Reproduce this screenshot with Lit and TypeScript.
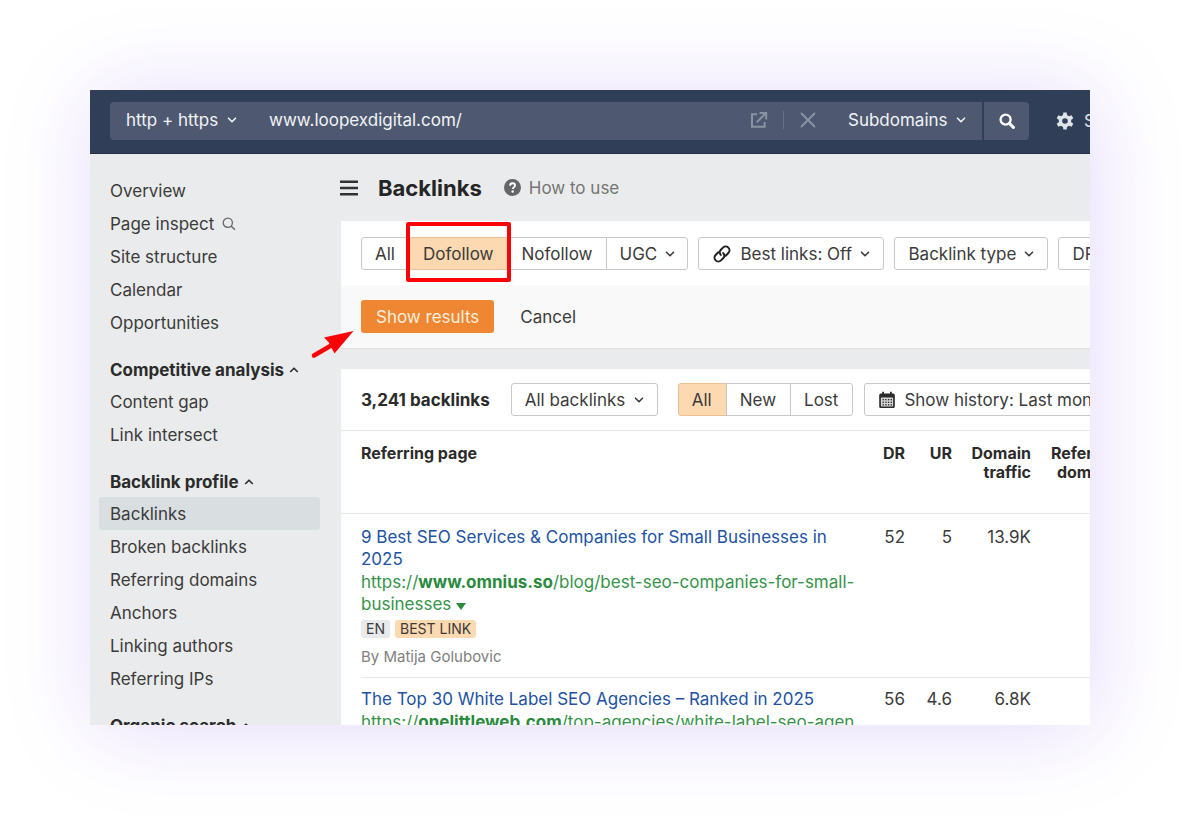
import { LitElement, html, css, svg, nothing, TemplateResult } from "lit";
import { customElement, property, state } from "lit/decorators.js";
import { classMap } from "lit/directives/class-map.js";

const chevronDown = html`<svg class="chevron" viewBox="0 0 10 10" width="10" height="10" aria-hidden="true">
  <path d="M1.5 3.2 5 6.7 8.5 3.2" fill="none" stroke="currentColor" stroke-width="1.6" stroke-linecap="round" stroke-linejoin="round" />
</svg>`;

const chevronUp = html`<svg viewBox="0 0 10 10" width="10" height="10" aria-hidden="true">
  <path d="M1.2 7 5 3.2 8.8 7" fill="none" stroke="currentColor" stroke-width="1.6" stroke-linejoin="round" />
</svg>`;

const linkIcon = html`<svg viewBox="0 0 20 20" width="20" height="20" aria-hidden="true">
  <g fill="none" stroke="#222" stroke-width="2" stroke-linecap="round" transform="rotate(-45 10 10)">
    <path d="M8.6 6.2H4.8a3.800 3.800 0 0 0 0 7.600h3a3.800 3.800 0 0 0 3.700-3.600" />
    <path d="M11.400 13.800h3.800a3.800 3.800 0 0 0 0-7.600h-3a3.800 3.800 0 0 0-3.700 3.600" />
  </g>
</svg>`;

const dots = [5.2, 7.9, 10.6, 13.3].flatMap((x) => [8.6, 11.2, 13.8].map((y) => svg`<rect x=${x - 0.7} y=${y - 0.6} width="1.4" height="1.3" />`));

const calendarIcon = html`<svg viewBox="0 0 18 18" width="18" height="18" aria-hidden="true">
  <path d="M4.2 0.8h1.8v1.6h6V0.8h1.8v1.6h1.4a1.6 1.6 0 0 1 1.6 1.6v11.4a1.6 1.6 0 0 1-1.6 1.6H2.8a1.6 1.6 0 0 1-1.6-1.6V4a1.6 1.6 0 0 1 1.6-1.6h1.4z" fill="#2b2b2b" />
  <rect x="2.9" y="6.4" width="12.2" height="9" rx=".6" fill="#d4d4d4" />
  <g fill="#2b2b2b">${dots}</g>
</svg>`;

interface NavGroup {
  title?: string;
  items: string[];
}

interface Row {
  title: string;
  host: string;
  path: string;
  breakAll?: boolean;
  author?: string;
  dr: string;
  ur: string;
  traffic: string;
}

const NAV: NavGroup[] = [
  { items: ["Overview", "Page inspect", "Site structure", "Calendar", "Opportunities"] },
  { title: "Competitive analysis", items: ["Content gap", "Link intersect"] },
  {
    title: "Backlink profile",
    items: ["Backlinks", "Broken backlinks", "Referring domains", "Anchors", "Linking authors", "Referring IPs"],
  },
  { title: "Organic search", items: [] },
];

const ROWS: Row[] = [
  {
    title: "9 Best SEO Services & Companies for Small Businesses in 2025",
    host: "www.omnius.so",
    path: "/blog/best-seo-companies-for-small-businesses",
    author: "Matija Golubovic",
    dr: "52",
    ur: "5",
    traffic: "13.9K",
  },
  {
    title: "The Top 30 White Label SEO Agencies – Ranked in 2025",
    host: "onelittleweb.com",
    path: "/top-agencies/white-label-seo-agencies",
    breakAll: true,
    dr: "56",
    ur: "4.6",
    traffic: "6.8K",
  },
];

/** A drop-down with an optional leading icon and a chevron drawn over its right padding. */
@customElement("drop-down")
export class DropDown extends LitElement {
  @property() label = "";
  @property() value = "";
  @property({ attribute: false }) icon?: TemplateResult;

  static styles = css`
    :host {
      display: flex;
      flex: none;
      box-sizing: border-box;
      align-items: center;
      height: 33px;
      padding: 0 13px;
      border: 1px solid #c8c8c8;
      border-radius: 3px;
      color: #3b3b3b;
      background: #fff;
    }
    :host([plain]) {
      border: 0;
      background: none;
      color: inherit;
    }
    :host([joined]) {
      border-radius: 0 3px 3px 0;
      padding: 0 12px;
    }
    .icon {
      display: flex;
      margin-right: 8px;
    }
    .box {
      display: grid;
      align-items: center;
    }
    select {
      grid-area: 1 / 1;
      appearance: none;
      margin: 0;
      padding: 0 18px 0 0;
      border: 0;
      background: none;
      color: inherit;
      font: 17px/22px Inter, sans-serif;
    }
    .chevron {
      grid-area: 1 / 1;
      justify-self: end;
      pointer-events: none;
    }
  `;

  render() {
    return html`${this.icon ? html`<span class="icon">${this.icon}</span>` : nothing}
      <span class="box">
        <select aria-label=${this.label}>
          <option>${this.value}</option>
        </select>
        ${chevronDown}
      </span>`;
  }
}

@customElement("app-root")
export class AppRoot extends LitElement {
  @state() private follow = "Dofollow";
  @state() private age = "All";

  static styles = css`
    :host {
      display: block;
      box-sizing: border-box;
      height: 100vh;
      padding: 90px 110px 110px 90px;
      overflow: hidden;
      background: #fff;
      font: 17px/22px Inter, sans-serif;
      color: #3b3b3b;
    }
    button,
    input {
      font: inherit;
      color: inherit;
      margin: 0;
      padding: 0;
      border: 0;
      background: none;
      white-space: nowrap;
    }
    a {
      color: inherit;
      text-decoration: none;
    }
    .frame {
      display: flex;
      flex-direction: column;
      height: 100%;
      background: #eaebec;
      box-shadow: 4px 4px 84px rgba(120, 70, 235, 0.2);
    }
    .clip {
      display: flex;
      flex-direction: column;
      height: 100%;
      overflow: hidden;
    }

    .topbar {
      display: flex;
      flex: none;
      align-items: center;
      gap: 27px;
      box-sizing: border-box;
      height: 64px;
      padding: 0 0 1px 20px;
      background: #303e58;
      border-bottom: 1px solid #22304a;
      color: #f1f3f6;
    }
    .search {
      display: flex;
      flex: 1;
      min-width: 0;
      gap: 2px;
    }
    .query {
      display: flex;
      flex: 1;
      min-width: 0;
      align-items: center;
      box-sizing: border-box;
      height: 38px;
      padding: 0 3px 2px;
      border-radius: 4px 0 0 4px;
      background: #4e5971;
    }
    .url {
      flex: 1;
      min-width: 0;
      margin-left: 19px;
    }
    .tool {
      display: flex;
      color: #8b93a3;
    }
    .divider {
      width: 1px;
      height: 18px;
      margin: 0 16px 0 15px;
      background: #667086;
    }
    .scope {
      margin-left: 19px;
    }
    .go {
      display: grid;
      place-items: center;
      width: 45px;
      border-radius: 0 4px 4px 0;
      background: #4e5971;
    }
    .settings {
      display: flex;
      align-items: center;
      gap: 10px;
      width: 34px;
      color: #dfe4e8;
    }
    .settings svg {
      flex: none;
    }

    .body {
      display: flex;
      flex: 1;
      min-height: 0;
    }
    .sidebar {
      flex: none;
      box-sizing: border-box;
      width: 250px;
      padding: 20px 20px 0 9px;
    }
    .heading {
      display: flex;
      align-items: center;
      gap: 5px;
      height: 31px;
      margin: 15px 0 0;
      padding-left: 11px;
      font-size: 17px;
      font-weight: 700;
      color: #2b2b2b;
    }
    .list {
      margin: 0;
      padding: 0;
      list-style: none;
    }
    .item {
      display: flex;
      align-items: center;
      gap: 8px;
      height: 33px;
      padding-left: 11px;
      border-radius: 3px;
    }
    .item.current {
      background: #d9dee1;
    }

    .main {
      flex: 1;
      min-width: 0;
    }
    .title {
      display: flex;
      align-items: center;
      height: 67px;
      box-sizing: border-box;
    }
    .menu {
      display: flex;
    }
    .title h1 {
      margin: 0 22px 0 20px;
      font-size: 22px;
      line-height: 28px;
      color: #252525;
    }
    .help {
      display: flex;
      align-items: center;
      gap: 8px;
      color: #757575;
    }
    .panel {
      margin-left: 1px;
      background: #fff;
    }
    .filters {
      display: flex;
      gap: 10px;
      padding: 16px 20px 15px;
    }
    .segments {
      display: flex;
      flex: none;
    }
    .segment {
      box-sizing: border-box;
      height: 33px;
      padding: 0 14px 0 13px;
      border: 1px solid #c8c8c8;
      margin-right: -1px;
    }
    .segment:first-child {
      border-radius: 3px 0 0 3px;
    }
    .segment:last-child {
      border-radius: 0 3px 3px 0;
      margin-right: 0;
    }
    .segment.on {
      background: #fcd9b0;
      border-color: #eebf93;
    }
    .marked {
      position: relative;
      display: flex;
    }
    .marker {
      position: absolute;
      inset: -15px -4px -12px -3px;
      border: 4px solid #fb0007;
      border-radius: 2px;
      pointer-events: none;
    }
    .actions {
      position: relative;
      display: flex;
      gap: 26px;
      padding: 15px 20px;
      background: #f9f9f9;
      border-bottom: 1px solid #dfdfdf;
      margin-bottom: 20px;
    }
    .primary {
      height: 33px;
      padding: 0 15px;
      border-radius: 3px;
      background: #ee8632;
      color: #fdeedd;
    }
    .arrow {
      position: absolute;
      left: -33px;
      top: 45px;
      pointer-events: none;
    }

    .toolbar {
      display: flex;
      align-items: center;
      padding: 14px 20px;
      border-bottom: 1px solid #e6e8ea;
    }
    .count {
      flex: none;
      margin: 0 21px 0 0;
      font-size: 17px;
      line-height: 22px;
      font-weight: 700;
      color: #2b2b2b;
    }
    .age {
      margin: 0 11px 0 20px;
    }

    .table {
      table-layout: fixed;
      width: 100%;
      min-width: 783px;
      border-collapse: collapse;
    }
    .c-page {
      width: 520px;
    }
    .c-dr {
      width: 44px;
    }
    .c-ur {
      width: 47px;
    }
    .c-traffic {
      width: 79px;
    }
    .c-domains {
      width: 93px;
    }
    th {
      height: 82px;
      box-sizing: border-box;
      padding: 13px 0 0;
      border-bottom: 1px solid #e6e8ea;
      vertical-align: top;
      text-align: right;
      font-size: 16px;
      line-height: 19px;
      font-weight: 700;
      color: #2b2b2b;
    }
    td {
      padding: 10px 0 11px;
      vertical-align: top;
      text-align: right;
    }
    .row:first-child td {
      padding-top: 12px;
    }
    th:first-child,
    td:first-child {
      padding-left: 20px;
      text-align: left;
    }
    .row {
      background: linear-gradient(#e6e8ea, #e6e8ea) 20px 100% / 100% 1px no-repeat;
    }
    .name {
      display: block;
      color: #2152a3;
    }
    .address {
      display: block;
      margin-top: 1px;
      color: #36934a;
    }
    .address b {
      color: #2a8a3e;
    }
    .break {
      word-break: break-all;
    }
    .tags {
      display: flex;
      gap: 5px;
      margin-top: 5px;
      font-size: 14px;
      line-height: 18px;
    }
    .tag {
      padding: 0 5px;
      border-radius: 3px;
      background: #e9eaeb;
    }
    .tag.best {
      background: #fcd9b0;
    }
    .author {
      margin: 9px 0 0;
      font-size: 15px;
      line-height: 20px;
      color: #808080;
    }
  `;

  private renderNav() {
    return NAV.map(
      (group) => html`
        ${group.title ? html`<h2 class="heading">${group.title} ${chevronUp}</h2>` : nothing}
        <ul class="list">
          ${group.items.map(
            (name) => html`<li>
              <a href="#" class=${classMap({ item: true, current: name === "Backlinks" })}>
                ${name}
                ${name === "Page inspect"
                  ? html`<svg viewBox="0 0 14 14" width="14" height="14" aria-hidden="true">
                      <circle cx="5.8" cy="5.8" r="4.6" fill="none" stroke="#666" stroke-width="1.3" />
                      <path d="m9.2 9.2 3.8 3.6" stroke="#666" stroke-width="1.5" />
                    </svg>`
                  : nothing}
              </a>
            </li>`
          )}
        </ul>
      `
    );
  }

  private segment(name: string, current: string, pick: (v: string) => void) {
    return html`<button
      class=${classMap({ segment: true, on: name === current })}
      aria-pressed=${name === current ? "true" : "false"}
      @click=${() => pick(name)}
    >${name}</button>`;
  }

  private renderRow(row: Row) {
    return html`<tr class="row">
      <td>
        <a class="name" href="#">${row.title}</a>
        <a class=${classMap({ address: true, break: !!row.breakAll })} href="#"
          >https://<b>${row.host}</b>${row.path}
          <svg viewBox="0 0 10 7" width="10" height="7" aria-hidden="true"><path d="M0 0h10L5 7z" fill="#2a8a3e" /></svg
        ></a>
        ${row.author
          ? html`<div class="tags"><span class="tag">EN</span><span class="tag best">BEST LINK</span></div>
              <p class="author">By ${row.author}</p>`
          : nothing}
      </td>
      <td>${row.dr}</td>
      <td>${row.ur}</td>
      <td>${row.traffic}</td>
      <td></td>
    </tr>`;
  }

  render() {
    const pickFollow = (v: string) => (this.follow = v);
    const pickAge = (v: string) => (this.age = v);
    return html`
      <div class="frame">
        <div class="clip">
          <header class="topbar">
            <div class="search">
              <div class="query">
                <drop-down plain label="Protocol" value="http + https"></drop-down>
                <input class="url" type="text" aria-label="Target URL" value="www.loopexdigital.com/" />
                <button class="tool" aria-label="Open in a new tab">
                  <svg viewBox="0 0 18 18" width="18" height="18" fill="none" stroke="currentColor" stroke-width="2">
                    <path d="M7 3.2H2v12.6h12.6V11" />
                    <path d="M6.6 11.4 15 3M9.6 1.9h6.6v6.6" />
                  </svg>
                </button>
                <span class="divider"></span>
                <button class="tool" aria-label="Clear">
                  <svg viewBox="0 0 16 16" width="16" height="16" stroke="currentColor" stroke-width="1.8">
                    <path d="M1 1l14 14M15 1 1 15" />
                  </svg>
                </button>
                <drop-down class="scope" plain label="Scope" value="Subdomains"></drop-down>
              </div>
              <button class="go" aria-label="Search">
                <svg viewBox="0 0 16 16" width="16" height="16" fill="none" stroke="#fff">
                  <circle cx="6.6" cy="6.6" r="5" stroke-width="2.4" />
                  <path d="m10.4 10.4 4 4" stroke-width="3" stroke-linecap="round" />
                </svg>
              </button>
            </div>
            <a class="settings" href="#">
              <svg viewBox="0 0 18 18" width="18" height="18" aria-hidden="true">
                <g fill="currentColor">
                  ${[0, 60, 120, 180, 240, 300].map(
                    (a) => svg`<path d="M7.3 0.4h3.4l.6 4.6h-4.6z" transform=${`rotate(${a} 9 9)`} />`
                  )}
                </g>
                <circle cx="9" cy="9" r="4.5" fill="none" stroke="currentColor" stroke-width="3.4" />
              </svg>
              Settings
            </a>
          </header>
          <div class="body">
            <nav class="sidebar" aria-label="Reports">${this.renderNav()}</nav>
            <main class="main">
              <div class="title">
                <button class="menu" aria-label="Toggle menu">
                  <svg viewBox="0 0 18 16" width="18" height="16">
                    <path d="M0 1.7h18M0 8h18M0 14.3h18" stroke="#333" stroke-width="2.6" />
                  </svg>
                </button>
                <h1>Backlinks</h1>
                <a class="help" href="#">
                  <svg viewBox="0 0 18 18" width="17" height="17" aria-hidden="true">
                    <circle cx="9" cy="9" r="9" fill="#666" />
                    <path d="M6.4 7.1c0-1.6 1.1-2.6 2.7-2.6s2.6.9 2.6 2.3c0 1.9-2.4 1.9-2.4 3.8" fill="none" stroke="#fff" stroke-width="1.9" />
                    <circle cx="9.2" cy="13.2" r="1.3" fill="#fff" />
                  </svg>
                  How to use
                </a>
              </div>
              <section class="panel" aria-label="Filters">
                <div class="filters">
                  <div class="segments">
                    ${this.segment("All", this.follow, pickFollow)}
                    <span class="marked">
                      ${this.segment("Dofollow", this.follow, pickFollow)}
                      <span class="marker"></span>
                    </span>
                    ${this.segment("Nofollow", this.follow, pickFollow)}
                    <drop-down joined label="Link attribute" value="UGC"></drop-down>
                  </div>
                  <drop-down label="Best links" value="Best links: Off" .icon=${linkIcon}></drop-down>
                  <drop-down label="Backlink type" value="Backlink type"></drop-down>
                  <drop-down label="Domain rating" value="DR"></drop-down>
                </div>
                <div class="actions">
                  <button class="primary">Show results</button>
                  <button>Cancel</button>
                  <svg class="arrow" viewBox="0 0 46 30" width="46" height="30" aria-hidden="true">
                    <path d="M6 25.500 24 15" stroke="#fb0007" stroke-width="4.500" stroke-linecap="round" />
                    <path d="M45.500 1 16 7.500 20.500 12 26.500 23.500z" fill="#fb0007" />
                  </svg>
                </div>
              </section>
              <section class="panel" aria-label="Backlinks">
                <div class="toolbar">
                  <h2 class="count">3,241 backlinks</h2>
                  <drop-down label="Grouping" value="All backlinks"></drop-down>
                  <div class="segments age">
                    ${["All", "New", "Lost"].map((n) => this.segment(n, this.age, pickAge))}
                  </div>
                  <drop-down label="History" value="Show history: Last month" .icon=${calendarIcon}></drop-down>
                </div>
                <table class="table">
                  <colgroup>
                    <col class="c-page" />
                    <col class="c-dr" />
                    <col class="c-ur" />
                    <col class="c-traffic" />
                    <col class="c-domains" />
                  </colgroup>
                  <thead>
                    <tr>
                      <th scope="col">Referring page</th>
                      <th scope="col">DR</th>
                      <th scope="col">UR</th>
                      <th scope="col">Domain<br />traffic</th>
                      <th scope="col">Referring<br />domains</th>
                    </tr>
                  </thead>
                  <tbody>
                    ${ROWS.map((row) => this.renderRow(row))}
                  </tbody>
                </table>
              </section>
            </main>
          </div>
        </div>
      </div>
    `;
  }
}
